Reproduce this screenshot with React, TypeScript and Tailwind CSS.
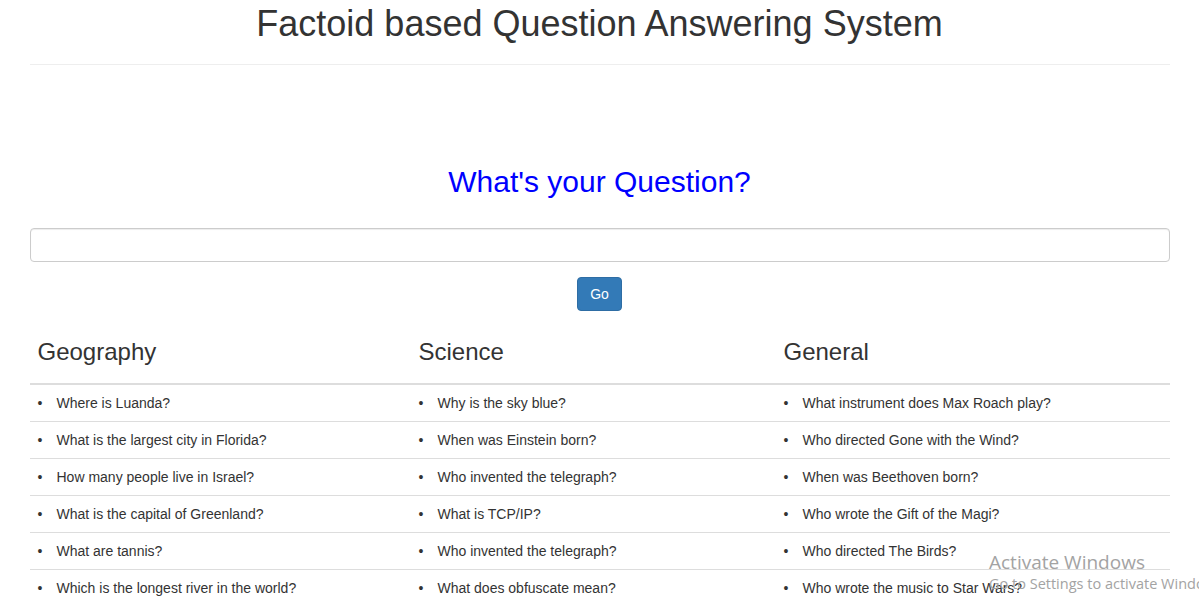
import React from 'react';

const geography = [
  'Where is Luanda?',
  'What is the largest city in Florida?',
  'How many people live in Israel?',
  'What is the capital of Greenland?',
  'What are tannis?',
  'Which is the longest river in the world?',
];
const science = [
  'Why is the sky blue?',
  'When was Einstein born?',
  'Who invented the telegraph?',
  'What is TCP/IP?',
  'Who invented the telegraph?',
  'What does obfuscate mean?',
];
const general = [
  'What instrument does Max Roach play?',
  'Who directed Gone with the Wind?',
  'When was Beethoven born?',
  'Who wrote the Gift of the Magi?',
  'Who directed The Birds?',
  'Who wrote the music to Star Wars?',
];

const Cell = ({ text }: { text: string }) => (
  <td className="px-2 py-2 border-t border-[#ddd] align-top">
    <div className="flex leading-5">
      <span className="w-[19px] shrink-0">•</span>
      <span>{text}</span>
    </div>
  </td>
);

export default function App() {
  return (
    <div className="relative min-h-[609px] overflow-hidden bg-white text-[#333] text-[14px] font-['Liberation_Sans',Arial,sans-serif]">
      <div className="w-[1170px] mx-auto px-[15px]">
        <div className="pt-[4px] pb-[20px] border-b border-[#eee]">
          <h1 className="text-[36px] leading-[40px] text-center font-normal">
            Factoid based Question Answering System
          </h1>
        </div>

        <h2 className="mt-[100px] text-[30px] leading-[33px] text-center text-[#0000ff] font-normal">
          What's your Question?
        </h2>

        <input
          type="text"
          className="mt-[30px] block w-full h-[34px] px-3 border border-[#ccc] rounded-[4px] shadow-[inset_0_1px_1px_rgba(0,0,0,0.075)] outline-none"
        />

        <div className="flex justify-center mt-[15px]">
          <button className="h-[34px] w-[45px] bg-[#337ab7] border border-[#2e6da4] rounded-[4px] text-white text-[14px]">
            Go
          </button>
        </div>

        <table className="w-full table-fixed border-collapse">
          <colgroup>
            <col className="w-[381px]" />
            <col className="w-[365px]" />
            <col className="w-[394px]" />
          </colgroup>
          <thead>
            <tr className="border-b-2 border-[#ddd]">
              {['Geography', 'Science', 'General'].map((h) => (
                <th key={h} className="px-2 py-2 text-left font-normal">
                  <h3 className="mt-5 mb-[10px] text-[24px] leading-[26px] font-normal">{h}</h3>
                </th>
              ))}
            </tr>
          </thead>
          <tbody>
            {geography.map((g, i) => (
              <tr key={i}>
                <Cell text={g} />
                <Cell text={science[i]} />
                <Cell text={general[i]} />
              </tr>
            ))}
          </tbody>
        </table>
      </div>

      <div className="absolute left-[989px] top-[550px] text-[#a3a3a3] font-['Open_Sans',sans-serif] whitespace-nowrap pointer-events-none">
        <div className="text-[19px] leading-[24px]">Activate Windows</div>
        <div className="text-[14.5px] leading-[18px] mt-[1px]">Go to Settings to activate Windows.</div>
      </div>
    </div>
  );
}
